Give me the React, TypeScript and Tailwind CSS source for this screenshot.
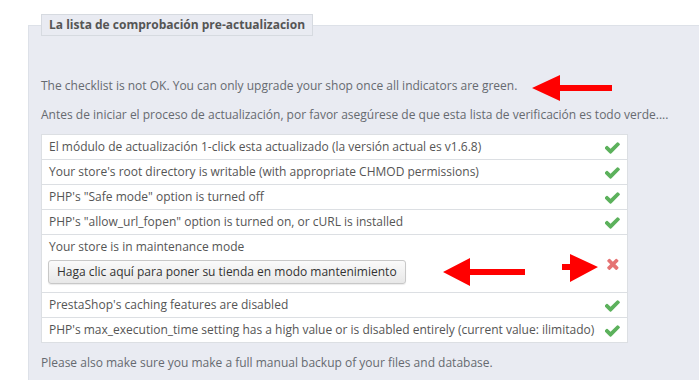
import React from "react";

// Rows of the pre-upgrade checklist
type Item = {
  label: string;
  ok: boolean;
  action?: string;
};

const items: Item[] = [
  { label: "El módulo de actualización 1-click esta actualizado (la versión actual es v1.6.8)", ok: true },
  { label: "Your store's root directory is writable (with appropriate CHMOD permissions)", ok: true },
  { label: 'PHP\'s "Safe mode" option is turned off', ok: true },
  { label: 'PHP\'s "allow_url_fopen" option is turned on, or cURL is installed', ok: true },
  {
    label: "Your store is in maintenance mode",
    ok: false,
    action: "Haga clic aquí para poner su tienda en modo mantenimiento",
  },
  { label: "PrestaShop's caching features are disabled", ok: true },
  {
    label: "PHP's max_execution_time setting has a high value or is disabled entirely (current value: ilimitado)",
    ok: true,
  },
];

const CheckIcon = () => (
  <svg width="15" height="13" viewBox="150 380 1530 1000" className="inline-block">
    <path
      fill="#5cb15c"
      d="M1671 566q0 40-28 68l-724 724-136 136q-28 28-68 28t-68-28l-136-136-362-362q-28-28-28-68t28-68l136-136q28-28 68-28t68 28l294 295 656-657q28-28 68-28t68 28l136 136q28 28 28 68z"
    />
  </svg>
);

const CrossIcon = () => (
  <svg width="13" height="12" viewBox="220 300 1280 1260" className="inline-block">
    <path
      fill="#e57373"
      d="M1490 1322q0 40-28 68l-136 136q-28 28-68 28t-68-28l-294-294-294 294q-28 28-68 28t-68-28l-136-136q-28-28-28-68t28-68l294-294-294-294q-28-28-28-68t28-68l136-136q28-28 68-28t68 28l294 294 294-294q28-28 68-28t68 28l136 136q28 28 28 68t-28 68l-294 294 294 294q28 28 28 68z"
    />
  </svg>
);

// Red annotation arrows drawn over the screenshot
const Arrows = () => (
  <svg
    width="699"
    height="380"
    className="absolute left-0 top-0 pointer-events-none"
  >
    <g fill="#ff0000">
      <polygon points="532,88 560,75 560,85 612,85 612,91 560,91 560,101" />
      <polygon points="443,272 470,258 470,269 525,269 525,275 470,275 470,286" />
      <polygon points="598,267 570,254 570,264 562,264 562,270 570,270 570,282" />
    </g>
  </svg>
);

export default function App() {
  return (
    <div
      className="relative w-[699px] h-[380px] overflow-hidden bg-white"
      style={{ fontFamily: '"Open Sans", "Liberation Sans", sans-serif' }}
    >
      <fieldset className="ml-[28px] mt-[14px] w-[720px] h-[400px] border border-[#dde1e8] bg-[#e9ebf2] px-[12px]">
        <legend className="border border-[#d6dae0] bg-[#e9ebf2] px-[7px] h-[22px] leading-[20px] text-[12px] font-bold text-[#555]">
          La lista de comprobación pre-actualizacion
        </legend>

        <p className="mt-[41px] text-[12px] leading-[18px] text-[#666a70]">
          The checklist is not OK. You can only upgrade your shop once all indicators are green.
        </p>
        <p className="mt-[11px] text-[12px] leading-[18px] text-[#666a70]">
          Antes de iniciar el proceso de actualización, por favor asegúrese de que esta lista de verificación es todo verde....
        </p>

        <table className="mt-[10px] w-[587px] border-collapse bg-white text-[12px] text-[#555]">
          <tbody>
            {items.map((item, i) => (
              <tr key={i} className="border border-[#dcdfe3]">
                <td className="pl-[7px] py-0 align-middle">
                  <div className={item.action ? "pt-[3px] pb-[8px]" : "h-[24px] leading-[24px]"}>
                    <div className={item.action ? "leading-[18px]" : ""}>{item.label}</div>
                    {item.action && (
                      <button className="mt-[4px] ml-[-1px] h-[24px] px-[8px] rounded-[3px] border border-[#c8c8c8] bg-gradient-to-b from-[#fafafa] to-[#e8e8e8] text-[12px] text-[#333] shadow-[0_1px_1px_rgba(0,0,0,0.08)]">
                        {item.action}
                      </button>
                    )}
                  </div>
                </td>
                <td className="w-[30px] text-center align-middle">
                  <div className="flex justify-center">
                    {item.ok ? <CheckIcon /> : <CrossIcon />}
                  </div>
                </td>
              </tr>
            ))}
          </tbody>
        </table>

        <p className="mt-[11px] text-[12px] leading-[18px] text-[#666a70]">
          Please also make sure you make a full manual backup of your files and database.
        </p>
      </fieldset>

      <Arrows />
    </div>
  );
}
